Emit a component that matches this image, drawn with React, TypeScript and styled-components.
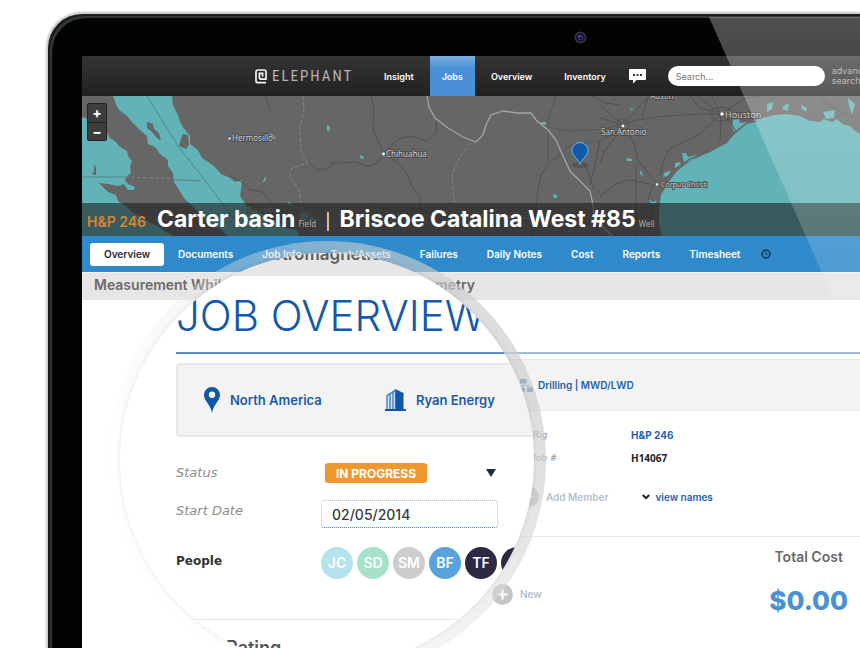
import React from "react";
import styled, { createGlobalStyle } from "styled-components";

const GlobalStyle = createGlobalStyle`
  *, *::before, *::after { box-sizing: border-box; }
  body { margin: 0; background: #fff; font-family: Inter, "Liberation Sans", sans-serif; color: #2b2b2b; }
  h1, h2, p, dl, dd, dt, ul { margin: 0; padding: 0; font-weight: inherit; }
  button, input, select { font-family: inherit; border: 0; background: none; padding: 0; margin: 0; }
  a { color: inherit; text-decoration: none; white-space: nowrap; }
  svg { flex: none; }
`;

const Page = styled.main`
  position: relative;
  display: flex;
  min-height: 100vh;
  overflow: hidden;
  padding: 12px 0 0 46px;
`;

const Laptop = styled.div`
  position: relative;
  flex: 1;
  min-width: 0;
  display: flex;
  flex-direction: column;
  padding: 42px 0 0 34px;
  background: #030303;
  border: solid #cfd2d4;
  border-width: 2px 0 0 2px;
  border-radius: 36px 0 0 0;
  box-shadow: inset 2px 2px 0 #191e1d, inset 4px 4px 1px #353938, 0 0 2px #c4c7c9;
  overflow: hidden;
`;

const CameraRow = styled.div`
  position: absolute;
  top: 17px;
  left: 526px;
  line-height: 0;
`;

const Screen = styled.div`
  flex: 1;
  background: #fff;
`;

const Glare = styled.div`
  position: absolute;
  top: 3px;
  right: 0;
  width: 151px;
  height: 283px;
  background: linear-gradient(rgba(255, 255, 255, 0.3), rgba(255, 255, 255, 0.22) 45%, rgba(255, 255, 255, 0.14));
  clip-path: polygon(0 0, 100% 0, 100% 100%, 125px 100%);
  pointer-events: none;
`;

const TopBar = styled.header`
  display: flex;
  align-items: center;
  height: 40px;
  padding-left: 173px;
  overflow: hidden;
  background: linear-gradient(#343434, #212121);
  color: #fff;
`;

const Brand = styled.a`
  display: flex;
  align-items: center;
  gap: 5px;
  width: 113px;
  flex: none;
  color: #b5b5b5;
  font: 400 15px "Liberation Sans Narrow", "Roboto Condensed", Roboto, sans-serif;
  letter-spacing: 2px;
`;

const NavLink = styled.a<{ $active?: boolean }>`
  display: flex;
  align-items: center;
  justify-content: center;
  height: 40px;
  padding: 0 ${(p) => (p.$active ? 12 : 16)}px;
  font-size: 9px;
  font-weight: 600;
  background: ${(p) => (p.$active ? "linear-gradient(#7db0e2, #4a90d6 30%)" : "none")};
`;

const IconButton = styled.button`
  display: flex;
  align-items: center;
  color: #fff;
  cursor: pointer;
`;

const ChatButton = styled(IconButton)`
  margin-left: 7px;
`;

const SearchInput = styled.input`
  width: 157px;
  flex: none;
  height: 20px;
  margin: 0 7px 0 22px;
  padding: 0 8px;
  border-radius: 10px;
  background: #fff;
  font-size: 9px;
  position: relative;
  &::placeholder { color: #777; opacity: 1; }
`;

const Advanced = styled.a`
  flex: none;
  font-size: 9px;
  line-height: 10px;
  color: #a5a5a5;
`;

const MapArea = styled.section`
  position: relative;
  display: flex;
  flex-direction: column;
  justify-content: space-between;
  height: 140px;
  background: #666;
  overflow: hidden;
`;

const MapDrawing = styled.svg`
  position: absolute;
  inset: 0;
  width: 100%;
  height: 100%;
`;

const ZoomControls = styled.div`
  position: relative;
  display: flex;
  flex-direction: column;
  width: 20px;
  margin: 7px 0 0 5px;
  border: 1px solid #222;
  border-radius: 2px;
  background: #3d3d3d;
`;

const ZoomButton = styled.button`
  height: 18px;
  color: #fff;
  font-size: 14px;
  font-weight: 700;
  line-height: 16px;
  & + & { border-top: 1px solid #222; }
`;

const TitleBar = styled.div`
  position: relative;
  display: flex;
  align-items: baseline;
  height: 33px;
  padding-left: 5px;
  line-height: 33px;
  background: rgba(25, 25, 25, 0.57);
  color: #fff;
  white-space: nowrap;
`;

const RigName = styled.span`
  width: 70px;
  color: #dc8430;
  font-size: 14px;
  font-weight: 600;
`;

const Title = styled.h1`
  font-size: 23px;
  font-weight: 700;
`;

const TitleNote = styled.span`
  margin-left: 3px;
  color: #aaa;
  font: 8px "Noto Sans", sans-serif;
`;

const Divider = styled.span`
  padding: 0 9px;
  font-size: 16px;
`;

const Tabs = styled.nav`
  display: flex;
  align-items: center;
  gap: 29px;
  height: 36px;
  padding-left: 8px;
  background: #2f8acb;
  color: #fff;
  font-size: 10px;
  font-weight: 600;
`;

const Tab = styled.a<{ $active?: boolean }>`
  line-height: 23px;
  ${(p) =>
    p.$active &&
    `padding: 0 14px; margin-right: -15px; border-radius: 3px; background: #fff; color: #2b2b2b;`}
`;

const HistoryButton = styled(IconButton)`
  margin-left: -8px;
`;

const Banner = styled.p`
  height: 28px;
  padding-left: 12px;
  border-top: 1px solid #f2f2f2;
  background: #e6e6e6;
  color: #6a6a6a;
  font-size: 14px;
  font-weight: 600;
  line-height: 24px;
  white-space: nowrap;
`;

const Summary = styled.div`
  display: flex;
  align-items: center;
  gap: 5px;
  height: 52px;
  margin: 5px 0 0 94px;
  padding-left: 344px;
  border: solid #e9e9e9;
  border-width: 1px 0;
  background: #f3f3f3;
  color: #1f5fa8;
  font-size: 10px;
  font-weight: 600;
`;

const HeadingRule = styled.div`
  height: 54px;
  margin-left: 94px;
  border-bottom: 2px solid #9dbcdb;
`;

const Facts = styled.dl`
  display: grid;
  grid-template-columns: 98px 1fr;
  grid-auto-rows: 23px;
  align-items: center;
  padding: 12px 0 0 451px;
`;

const FactLabel = styled.dt`
  color: #8c8c8c;
  font: italic 9px "DejaVu Sans", sans-serif;
`;

const FactValue = styled.dd<{ $link?: boolean }>`
  color: ${(p) => (p.$link ? "#1f62b0" : "#222")};
  font: ${(p) => (p.$link ? "700 10px Inter, sans-serif" : '700 10px "Noto Sans", sans-serif')};
`;

const MemberRow = styled.div`
  display: flex;
  align-items: center;
  height: 66px;
  margin: 2px 0 0 94px;
  padding: 0 0 14px 342px;
  border-bottom: 1px solid #e8e8e8;
`;

const AddButton = styled.button`
  display: flex;
  align-items: center;
  gap: 7px;
  color: #b3c0cc;
  font-size: 10px;
  font-weight: 600;
`;

const ViewNames = styled(AddButton)`
  margin-left: 34px;
  gap: 5px;
  color: #1f62b0;
`;

const Bottom = styled.div`
  display: flex;
  justify-content: space-between;
  align-items: center;
  padding: 10px 12px 20px 410px;
`;

const NewSlot = styled.div`
  padding-top: 26px;
`;

const Cost = styled.div`
  display: flex;
  flex-direction: column;
  align-items: center;
  gap: 20px;
`;

const CostLabel = styled.h2`
  color: #6a6a6a;
  font-size: 14px;
  font-weight: 600;
  line-height: 20px;
`;

const CostValue = styled.p`
  color: #4a90d2;
  font-size: 26px;
  font-weight: 800;
  line-height: 28px;
`;

const Lens = styled.section`
  position: absolute;
  top: 241px;
  left: 108px;
  width: 438px;
  height: 438px;
  padding: 12px;
  border-radius: 50%;
  background: linear-gradient(60deg, rgba(252, 252, 252, 0.2) 20%, rgba(225, 225, 225, 0.4) 55%, rgba(205, 205, 205, 0.68) 85%);
`;

const Glass = styled.div`
  height: 100%;
  border-radius: 50%;
  overflow: hidden;
  background: #fff;
  box-shadow: 0 0 5px rgba(0, 0, 0, 0.1);
`;

const LensBand = styled.p`
  height: 23px;
  padding-left: 127px;
  background: #e6e6e6;
  color: #5e5e5e;
  font-size: 17px;
  font-weight: 600;
  line-height: 2px;
`;

const LensBody = styled.div`
  width: 460px;
  padding-left: 56px;
`;

const LensHeading = styled.h2`
  height: 78px;
  border-bottom: 2px solid #5a8dc3;
  color: #1459a8;
  font-size: 42px;
  font-weight: 300;
  line-height: 80px;
  white-space: nowrap;
`;

const LensPanel = styled.div`
  display: flex;
  align-items: center;
  height: 74px;
  margin: 9px 0 17px;
  padding-left: 26px;
  border: 2px solid #e9e9e9;
  border-radius: 4px;
  background: #f3f3f3;
  color: #1c5ba6;
  font-size: 13px;
  font-weight: 600;
`;

const PanelItem = styled.span`
  display: flex;
  align-items: center;
  gap: 10px;
  width: 181px;
`;

const Row = styled.div<{ $height: number }>`
  display: grid;
  grid-template-columns: 145px 1fr;
  align-items: center;
  height: ${(p) => p.$height}px;
`;

const RowLabel = styled.label<{ $lift?: number }>`
  color: #8b8b8b;
  font: italic 13px "DejaVu Sans", sans-serif;
  padding-bottom: ${(p) => p.$lift ?? 2}px;
`;

const PeopleLabel = styled.span`
  color: #333;
  font: bold 12px "DejaVu Sans", sans-serif;
  padding-bottom: 4px;
`;

const SelectWrap = styled.div`
  display: flex;
  align-items: center;
  justify-content: space-between;
  width: 175px;
  padding-left: 4px;
`;

const StatusSelect = styled.select`
  appearance: none;
  width: 102px;
  height: 20px;
  border-radius: 3px;
  background: #f0982d;
  color: #fff;
  font-size: 12px;
  font-weight: 700;
  text-align: center;
  text-align-last: center;
`;

const DateInput = styled.input`
  width: 177px;
  height: 28px;
  padding: 0 10px;
  border: 1px dotted #bbb;
  border-bottom: 1px dotted #3f7cc4;
  border-radius: 3px;
  color: #3a3a3a;
  font-size: 14px;
  font-weight: 500;
`;

const People = styled.ul`
  display: flex;
  gap: 4px;
  list-style: none;
`;

const Avatar = styled.li<{ $color: string }>`
  flex: none;
  width: 32px;
  height: 32px;
  border-radius: 50%;
  background: ${(p) => p.$color};
  color: #fff;
  font-size: 14px;
  font-weight: 600;
  line-height: 31px;
  text-align: center;
`;

const Rating = styled.h2`
  margin-top: 30px;
  padding-top: 17px;
  border-top: 1px solid #e4e4e4;
  color: #555;
  font-size: 18px;
  font-weight: 600;
  line-height: 22px;
`;

const PEOPLE = [
  { initials: "JC", color: "#b5e2ec" },
  { initials: "SD", color: "#a6e2c8" },
  { initials: "SM", color: "#cdcdcd" },
  { initials: "BF", color: "#58a3dc" },
  { initials: "TF", color: "#2f2843" },
  { initials: "", color: "#2f2843" },
];

function Camera() {
  return (
    <svg width="13" height="13" viewBox="0 0 13 13" aria-hidden="true">
      <circle cx="6.5" cy="6.5" r="6" fill="#33333a" />
      <circle cx="6.5" cy="6.5" r="4.3" fill="#15122b" />
      <circle cx="6.5" cy="6.5" r="2.6" fill="#43309a" />
      <circle cx="6.8" cy="7" r="1.2" fill="#0d0a20" />
      <circle cx="5" cy="5.2" r=".7" fill="#8f86c8" />
    </svg>
  );
}

function LogoMark() {
  return (
    <svg width="12" height="15" viewBox="0 0 12 15" fill="none" stroke="#f4f4f4" strokeWidth="1.7" aria-hidden="true">
      <path d="M11 13.7H3Q1 13.7 1 11.7V3Q1 1 3 1H9Q11 1 11 3V10.2H6.2Q4.4 10.2 4.4 8.6V4.3H7.6V7.6" />
    </svg>
  );
}

function ChatIcon() {
  return (
    <svg width="17" height="16" viewBox="0 0 17 16" aria-hidden="true">
      <path d="M1 1H16Q17 1 17 2V11Q17 12 16 12H7.5L4 15.5V12H1Q0 12 0 11V2Q0 1 1 1Z" fill="#fff" />
      <path d="M4 6h2v2H4zM7.5 6h2v2h-2zM11 6h2v2h-2z" fill="#333" />
    </svg>
  );
}

function ClockIcon() {
  return (
    <svg width="10" height="10" viewBox="0 0 10 10" fill="none" stroke="#1d3a52" aria-hidden="true">
      <circle cx="5" cy="5" r="3.9" strokeWidth="1.6" />
      <path d="M4.8 3V5.3H6.6" />
    </svg>
  );
}

function PinIcon() {
  return (
    <svg width="16" height="26" viewBox="0 0 16 26" aria-hidden="true">
      <path fillRule="evenodd" fill="#0f57a8" d="M8 0A8 8 0 0 1 16 8C16 14 9.500 17 8 26C6.500 17 0 14 0 8A8 8 0 0 1 8 0ZM8 4.600A3.200 3.200 0 1 0 8 11A3.200 3.200 0 1 0 8 4.600Z" />
    </svg>
  );
}

function BuildingIcon() {
  return (
    <svg width="21" height="22" viewBox="0 0 21 22" aria-hidden="true">
      <path d="M10 0L18.500 4V20.500H10Z" fill="#0f57a8" />
      <path d="M2 20.500V6.500L10.500 1.200V20.500M5 5V20M8 3V20" fill="#d5e4f4" stroke="#2f6fb5" strokeWidth="1.200" />
      <path d="M0 20H21V22H0Z" fill="#0f57a8" />
    </svg>
  );
}

function FlowIcon() {
  return (
    <svg width="13" height="13" viewBox="0 0 13 13" aria-hidden="true">
      <path d="M0 0H6.500V4.500H0ZM0 9H5V12.500H0ZM7 8.500H13V13H7Z" fill="#3f79ba" />
      <path d="M3.200 4V6.700M2.500 9V6.700H10V9" fill="none" stroke="#5f91c8" />
    </svg>
  );
}

function PlusIcon() {
  return (
    <svg width="21" height="21" viewBox="0 0 21 21" aria-hidden="true">
      <circle cx="10.5" cy="10.5" r="10.5" fill="#c6c6c6" />
      <path d="M10.500 5.500V15.500M5.500 10.500H15.500" stroke="#fff" strokeWidth="2.200" />
    </svg>
  );
}

function ChevronIcon() {
  return (
    <svg width="8" height="6" viewBox="0 0 8 6" fill="none" stroke="#222" strokeWidth="2" aria-hidden="true">
      <path d="M.8 1L4 4.200L7.200 1" />
    </svg>
  );
}

function RegionMap() {
  return (
    <MapDrawing viewBox="82 96 778 140" preserveAspectRatio="xMinYMin slice" aria-hidden="true">
      <g fill="#62b3b7">
        <path d="M82 117L86 118L90 122L97 125L101 130L107 133L110 138L116 142L119 146L127 151L128 156L132 161L130 166L131 173L127 176L125 180L128 184L135 187L134 190L128 190L124 184L118 186L108 184L99 183L103 187L108 192L116 195L118 201L126 206L133 213L142 217L150 223L158 226L164 231L173 236H82Z" />
        <path d="M113 96H172L173 105L178 115L180 122L185 130L190 136L190 144L198 150L202 158L208 162L214 166L221 174L230 178L235 182L242 180L241 190L240 196L246 205L252 210L260 212L267 218L276 221L285 228L297 230L299 236H227L222 230L210 224L204 217L197 211L190 204L184 198L179 190L174 182L173 173L168 166L168 160L160 154L155 147L148 144L147 136L141 131L132 122L126 115L119 110L116 104Z" />
        <path d="M860 134L854 130L850 126L842 124L837 119L832 122L824 119L820 122L810 121L800 116L787 114L775 115L762 118L752 121L744 125L736 132L727 143L710 152L690 161L677 171L668 183L661 195L659 210L659 224L662 236H860Z" />
        <path d="M733 120L739 119L740 123L747 122L741 127L734 132L732 127ZM682 153L686 153L688 157L695 155L698 156L692 160L684 163ZM675 163L680 162L681 166L675 169ZM664 173L671 170L668 176L663 177ZM648 199L653 202L658 200L656 204L649 203ZM767 104L773 102L772 109L767 112ZM785 105L789 103L788 111L782 109ZM801 105L807 108L806 112L802 109ZM823 112L835 110L834 118L826 119ZM848 98L855 104L852 115L849 106Z" />
        <path d="M327 125L330 127L329 132L327 130ZM262 183L266 176L266 180ZM269 133L273 135L276 139L272 138ZM360 155L364 157L363 159L360 158ZM541 122L546 122L546 125L541 124ZM553 194L557 195L557 198L554 198ZM626 158L632 159L632 161L627 161ZM640 170L642 172L643 176L640 174ZM629 108L633 109L632 111ZM287 201L292 204L290 206Z" />
        <path d="M300 214L307 212L309 218L302 223L298 227ZM311 214L315 220L308 226Z" opacity=".5" />
      </g>
      <g fill="#666">
        <path d="M147 122L153 124L154 129L159 133L161 140L158 139L151 131L147 128Z" />
        <path d="M183 134L188 135L189 145L186 149L179 146L181 139Z" />
        <path d="M94 164L96 168L96 175L92 174L94 171Z" />
      </g>
      <g fill="none" stroke="#4b6064" strokeOpacity=".55">
        <path d="M147 96L178 146L203 178L235 220L247 236" />
        <path d="M82 177L125 177L200 181" />
      </g>
      <g fill="none" stroke="#525252">
        <path d="M371 96L374 108L373 130L380 145L384 154L394 160L405 170L413 188L420 198V208L440 221" />
        <path d="M330 163H342L355 162L368 166L378 163L383 154M384 152L398 139L410 136L428 141L436 133L437 118" />
        <path d="M230 176L242 182L250 190L263 192L272 204L279 212L286 222M265 96L268 104L270 110M310 163L316 170L325 169L336 163" />
        <path d="M556 96L548 120V162M548 127L571 131L605 129L623 124M557 156L570 146L598 141L616 133L623 126" strokeOpacity=".8" />
        <path d="M560 155L548 164L541 175L538 190L536 210L532 236M600 140L595 165L590 185M585 165L594 190" />
        <path d="M600 105L610 114L623 125L636 120L665 116L700 114L721 114M623 125L647 98L655 96M642 116L648 98M720 113L698 97M720 113L712 96M723 113L745 98L760 96M721 115L720 141M721 115L730 121L736 132M721 114L697 136L670 148L664 160L660 176M623 126L634 143L637 158L647 172L657 184M623 128L605 150L600 163M600 196L618 183L630 180L660 186M636 165V236M623 125L600 118M690 96L700 108L715 112" />
        <path d="M712 109L720 107L729 108L731 114L728 120L719 121L712 118Z" />
        <path d="M653 186L648 199L653 210L649 236M592 96L605 103L620 105M420 208L400 212L370 206M820 96L830 106L845 114" />
        <circle cx="623" cy="125" r="6" />
      </g>
      <path d="M657 236L654 212L659 192L672 171L690 159L712 150L730 137L747 123L757 121" fill="none" stroke="#666" strokeWidth="1.500" />
      <path d="M427 96L429 107L435 118L448 128L463 137L476 142L483 135L486 125L491 115L503 111L517 113H531L536 120L548 130L556 140L563 156L570 171L580 181L590 191L592 200L594 216L604 228L612 236" fill="none" stroke="#a5a5a5" strokeWidth="1.300" />
      <path d="M303 96L304 110L300 128L301 150L307 163L291 169L290 177L299 191L301 206L306 220M470 143L458 160L452 175L453 190L455 206M125 177L200 180" fill="none" stroke="#8d8d8d" strokeDasharray="4 2" strokeWidth=".8" />
      <ellipse cx="580" cy="165" rx="8" ry="3" fill="#444" opacity=".5" />
      <path d="M580 164.500C578 158 572 156 572 150.500A8 8 0 0 1 588 150.500C588 156 582 158 580 164.500Z" fill="#0f5ba8" stroke="#76b4e4" />
      <g fill="#fff">
        <circle cx="229.500" cy="138.500" r="1.100" />
        <circle cx="383.500" cy="154" r="1.400" />
        <circle cx="623" cy="126" r="1.400" />
        <circle cx="722" cy="114" r="1.700" />
        <circle cx="657" cy="184.500" r="1.200" />
      </g>
      <g fill="#d0d0d0" stroke="#454545" strokeWidth="1.500" paintOrder="stroke" fontFamily="Noto Sans, sans-serif" fontSize="8">
        <text x="232" y="141">Hermosillo</text>
        <text x="386" y="157">Chihuahua</text>
        <text x="601" y="135">San Antonio</text>
        <text x="725" y="118" fontSize="9">Houston</text>
        <text x="661" y="187" fontSize="7">Corpus Christi</text>
        <text x="650" y="99">Austin</text>
        <text x="247" y="213" opacity=".6">Navojoa</text>
        <text x="494" y="220" opacity=".5">Monclova</text>
      </g>
    </MapDrawing>
  );
}

function JobLens() {
  return (
    <Lens aria-label="Job overview">
      <Glass>
        <LensBand>Electromagnetic</LensBand>
        <LensBody>
          <LensHeading>JOB OVERVIEW</LensHeading>
          <LensPanel>
            <PanelItem><PinIcon />North America</PanelItem>
            <PanelItem><BuildingIcon />Ryan Energy</PanelItem>
          </LensPanel>
          <Row $height={38}>
            <RowLabel htmlFor="status">Status</RowLabel>
            <SelectWrap>
              <StatusSelect id="status" defaultValue="progress">
                <option value="progress">IN PROGRESS</option>
                <option value="complete">COMPLETE</option>
              </StatusSelect>
              <svg width="10" height="8" viewBox="0 0 10 8" aria-hidden="true">
                <path d="M0 0H10L5 8Z" fill="#1d2f40" />
              </svg>
            </SelectWrap>
          </Row>
          <Row $height={44}>
            <RowLabel htmlFor="start" $lift={8}>Start Date</RowLabel>
            <DateInput id="start" defaultValue="02/05/2014" />
          </Row>
          <Row $height={53}>
            <PeopleLabel>People</PeopleLabel>
            <People>
              {PEOPLE.map((p, i) => (
                <Avatar key={i} $color={p.color}>{p.initials}</Avatar>
              ))}
            </People>
          </Row>
          <Rating>Crew Rating</Rating>
        </LensBody>
      </Glass>
    </Lens>
  );
}

export default function App() {
  return (
    <Page>
      <GlobalStyle />
      <Laptop>
        <CameraRow><Camera /></CameraRow>
        <Screen>
          <TopBar>
            <Brand href="#"><LogoMark />ELEPHANT</Brand>
            <NavLink href="#">Insight</NavLink>
            <NavLink href="#" $active>Jobs</NavLink>
            <NavLink href="#">Overview</NavLink>
            <NavLink href="#">Inventory</NavLink>
            <ChatButton aria-label="Messages"><ChatIcon /></ChatButton>
            <SearchInput type="search" aria-label="Search" placeholder="Search..." />
            <Advanced href="#">advanced<br />search</Advanced>
          </TopBar>
          <MapArea>
            <RegionMap />
            <ZoomControls>
              <ZoomButton aria-label="Zoom in">+</ZoomButton>
              <ZoomButton aria-label="Zoom out">−</ZoomButton>
            </ZoomControls>
            <TitleBar>
              <RigName>H&amp;P 246</RigName>
              <Title>Carter basin</Title>
              <TitleNote>Field</TitleNote>
              <Divider>|</Divider>
              <Title>Briscoe Catalina West #85</Title>
              <TitleNote>Well</TitleNote>
            </TitleBar>
          </MapArea>
          <Tabs>
            <Tab href="#" $active>Overview</Tab>
            <Tab href="#">Documents</Tab>
            <Tab href="#">Job Info</Tab>
            <Tab href="#">Tech/Assets</Tab>
            <Tab href="#">Failures</Tab>
            <Tab href="#">Daily Notes</Tab>
            <Tab href="#">Cost</Tab>
            <Tab href="#">Reports</Tab>
            <Tab href="#">Timesheet</Tab>
            <HistoryButton aria-label="History"><ClockIcon /></HistoryButton>
          </Tabs>
          <Banner>Measurement While Drilling | Electromagnetic Telemetry</Banner>
          <HeadingRule />
          <Summary><FlowIcon />Drilling | MWD/LWD</Summary>
          <Facts>
            <FactLabel>Rig</FactLabel>
            <FactValue $link><a href="#">H&amp;P 246</a></FactValue>
            <FactLabel>Job #</FactLabel>
            <FactValue>H14067</FactValue>
          </Facts>
          <MemberRow>
            <AddButton><PlusIcon />Add Member</AddButton>
            <ViewNames><ChevronIcon />view names</ViewNames>
          </MemberRow>
          <Bottom>
            <NewSlot><AddButton><PlusIcon />New</AddButton></NewSlot>
            <Cost>
              <CostLabel>Total Cost</CostLabel>
              <CostValue>$0.00</CostValue>
            </Cost>
          </Bottom>
        </Screen>
        <Glare />
      </Laptop>
      <JobLens />
    </Page>
  );
}
